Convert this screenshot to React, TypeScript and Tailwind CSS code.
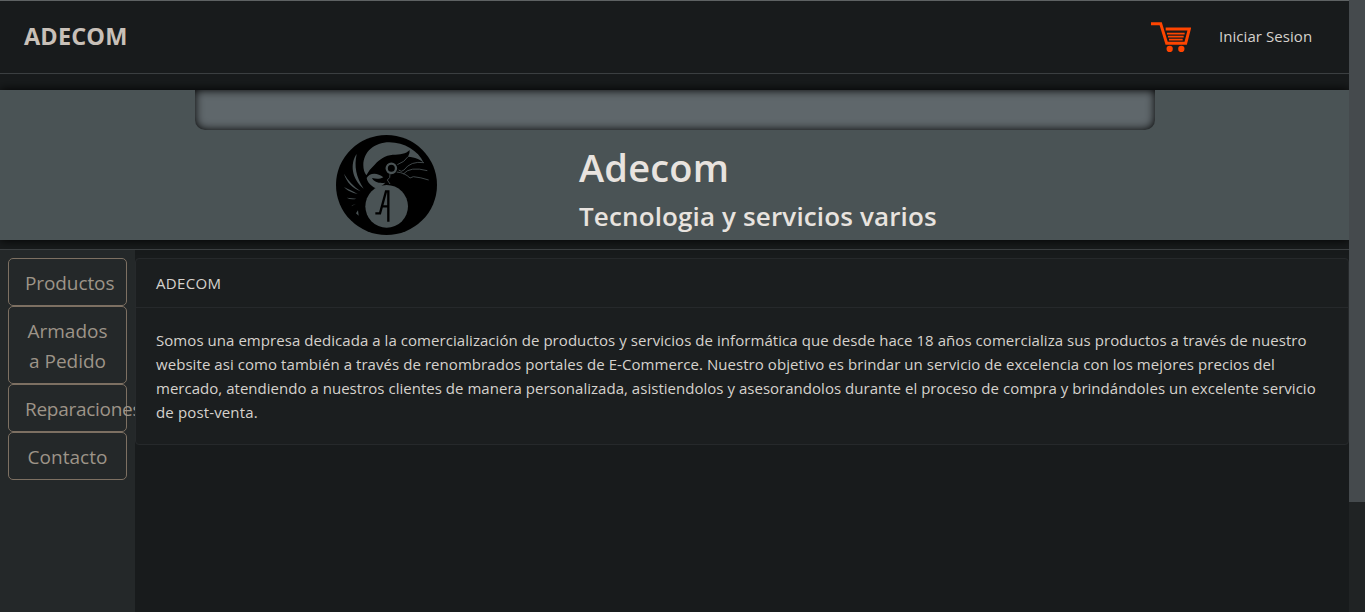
import React from 'react';

const links = [
  { lines: ['Productos'], spacing: 'tracking-[-0.1px]' },
  { lines: ['Armados', 'a Pedido'], spacing: 'tracking-[0px]' },
  { lines: ['Reparaciones'], spacing: 'tracking-[-0.28px]' },
  { lines: ['Contacto'], spacing: 'tracking-[0.05px]' },
];

const paragraph = [
  { spacing: 'tracking-[0.056px]', text: 'Somos una empresa dedicada a la comercialización de productos y servicios de informática que desde hace 18 años comercializa sus productos a través de nuestro' },
  { spacing: 'tracking-[0.063px]', text: 'website asi como también a través de renombrados portales de E-Commerce. Nuestro objetivo es brindar un servicio de excelencia con los mejores precios del' },
  { spacing: 'tracking-[0.025px]', text: 'mercado, atendiendo a nuestros clientes de manera personalizada, asistiendolos y asesorandolos durante el proceso de compra y brindándoles un excelente servicio' },
  { spacing: 'tracking-[0.14px]', text: 'de post-venta.' },
];

function Logo() {
  return (
    <svg className="block h-[100px] w-[101px]" viewBox="30 21 303 300">
      <ellipse cx="181.5" cy="171" rx="151.5" ry="150" fill="#000" />
      <g fill="#4a5355">
        <path d="M121 142 Q112 130 112 112 C112 72 145 43 190 43 C235 43 276 68 293 104 C282 94 268 88 246 86 Q252 76 251 66 C240 78 222 80 200 80 C178 82 160 94 146 110 Q130 124 121 142Z" />
        <path d="M92 78 C72 106 76 152 113 182 C90 146 84 116 92 78Z" />
        <path d="M54 137 C62 164 80 180 104 190 C82 174 66 158 54 137Z" />
        <path d="M54 177 C66 190 78 194 95 198 C80 189 68 184 54 177Z" />
        <path d="M62 209 Q76 217 91 212 Q76 210 62 209Z" />
        <path d="M76 235 L90 227 L79 232Z M90 256 L96 247 L98 263Z" />
        <path d="M122 150 C130 134 154 132 172 148 C160 154 150 153 138 150 C144 162 160 167 178 164 C172 172 160 178 150 181 C134 174 124 162 122 150Z" />
        <circle cx="182" cy="235" r="64" />
      </g>
      <circle cx="196" cy="121" r="14" fill="#000" stroke="#4a5355" strokeWidth="7" />
      <path d="M214 110 Q236 102 246 86 M218 126 Q226 134 234 126 Q254 98 294 104 M232 138 Q252 114 304 128 M212 132 Q236 134 252 150 L262 146 Q284 148 308 156 M192 138 Q194 150 184 156 L192 168" fill="none" stroke="#4a5355" strokeWidth="2.5" />
      <path d="M148 256 H162 L180 190 H187 V281 M168 235 H187" fill="none" stroke="#000" strokeWidth="7" />
    </svg>
  );
}

function Cart() {
  return (
    <svg className="block h-[30px] w-10" viewBox="0 0 120 90" fill="none" stroke="#ff4500">
      <path d="M0 5 H29 L47 64 H104 L115 21 H44" strokeWidth="9" />
      <path d="M48 35 H101 M51 44 H98 M54 53 H95" strokeWidth="5" />
      <g fill="#ff4500" stroke="none">
        <circle cx="56" cy="81" r="9.5" />
        <circle cx="91" cy="81" r="9.5" />
      </g>
    </svg>
  );
}

export default function App() {
  return (
    <div className="flex h-[612px] w-[1365px] overflow-hidden bg-[#181b1c] font-['Open_Sans','Noto_Sans',sans-serif] text-[#d6d2cd]">
      <div className="flex w-[1349px] flex-col">
        <header className="flex h-[74px] shrink-0 items-center border-t border-b border-t-[#5e6263] border-b-[#3b3f41] pl-6">
          <span className="pb-0.5 text-[23.5px] leading-9 font-bold tracking-[0.15px] text-[#c8c0b8]">ADECOM</span>
          <div className="mr-9 ml-auto flex items-center gap-7">
            <Cart />
            <span className="w-[94px] pb-0.5 text-[15px] whitespace-nowrap tracking-[0.06px]">Iniciar Sesion</span>
          </div>
        </header>
        <section className="mt-4 flex h-[150px] shrink-0 flex-col bg-[#4a5355] shadow-[0_0_10px_#000]">
          <div className="mx-auto h-10 w-[960px] rounded-b-[10px] bg-[#5f676b] shadow-[inset_0_0_10px_#000]" />
          <div className="flex pl-[336px] text-[#e8e3df]">
            <div className="pt-[5px]"><Logo /></div>
            <div className="ml-[142px] whitespace-nowrap">
              <h1 className="mt-[13px] text-[38px] leading-12 font-semibold tracking-[0.2px]">Adecom</h1>
              <h2 className="mt-2 text-[26px] leading-[34px] font-semibold tracking-[0.14px]">Tecnologia y servicios varios</h2>
            </div>
          </div>
        </section>
        <div className="mt-[9px] flex grow border-t border-[#3b3f41]">
          <nav className="w-[135px] shrink-0 overflow-hidden bg-[#242829] px-2 pt-2">
            {links.map((link) => (
              <a key={link.lines[0]} className={`block rounded-[5px] border border-[#7d7062] px-4 pt-[9px] pb-[7px] text-center text-[19px] leading-[30px] whitespace-nowrap text-[#9d9488] ${link.spacing}`}>
                {link.lines.map((line) => (
                  <span key={line} className="block">{line}</span>
                ))}
              </a>
            ))}
          </nav>
          <main className="grow pt-2">
            <article className="h-[187px] rounded-[4px] border border-[#26292b] bg-[#1b1e1f]">
              <div className="h-[49px] border-b border-[#26292b] px-5 py-3 text-[15px] leading-6 tracking-[0.35px]">ADECOM</div>
              <div className="px-5 pt-5 text-[15px] leading-6 whitespace-nowrap">
                {paragraph.map((line) => (
                  <span key={line.text} className={`block ${line.spacing}`}>{line.text}</span>
                ))}
              </div>
            </article>
          </main>
        </div>
      </div>
      <div className="w-4 bg-[#202324]">
        <div className="h-[502px] bg-[#454a4d]" />
      </div>
    </div>
  );
}
